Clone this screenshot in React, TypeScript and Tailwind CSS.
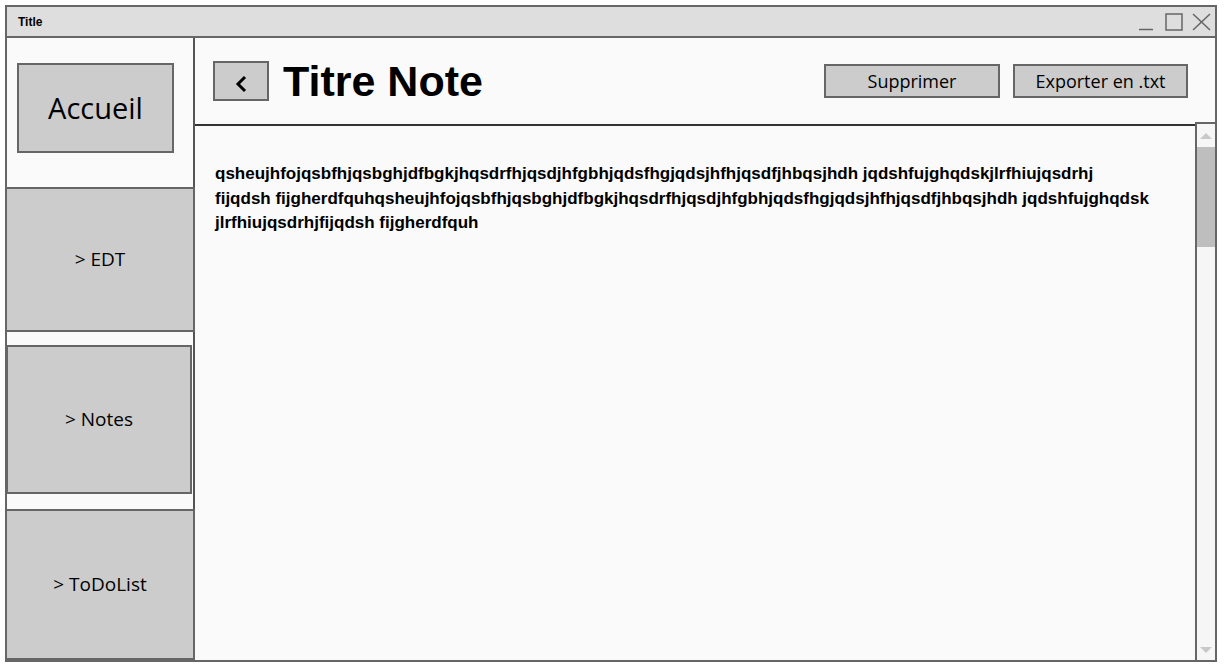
const sketch = "font-['Comic_Sans_MS','Open_Sans',sans-serif]";

const noteLines = [
  "qsheujhfojqsbfhjqsbghjdfbgkjhqsdrfhjqsdjhfgbhjqdsfhgjqdsjhfhjqsdfjhbqsjhdh jqdshfujghqdskjlrfhiujqsdrhj",
  "fijqdsh fijgherdfquhqsheujhfojqsbfhjqsbghjdfbgkjhqsdrfhjqsdjhfgbhjqdsfhgjqdsjhfhjqsdfjhbqsjhdh jqdshfujghqdsk",
  "jlrfhiujqsdrhjfijqdsh fijgherdfquh",
];

function WindowControls() {
  return (
    <svg width="72" height="18" viewBox="0 0 72 18" fill="none" stroke="#666" strokeWidth="1.5">
      <line x1="0" y1="16.5" x2="14" y2="16.5" />
      <rect x="27" y="1" width="16" height="16" />
      <line x1="54" y1="1" x2="71" y2="17" />
      <line x1="71" y1="1" x2="54" y2="17" />
    </svg>
  );
}

function SideButton({ label, className }: { label: string; className: string }) {
  return (
    <button
      type="button"
      className={`flex items-center justify-center border-2 border-[#666] bg-[#cccccc] text-[19px] text-black ${sketch} ${className}`}
    >
      {label}
    </button>
  );
}

export default function App() {
  return (
    <div className="h-[670px] w-[1226px] bg-white pl-[5px] pt-[5px]">
      <div className="flex h-[657px] w-[1212px] flex-col border-2 border-[#666] bg-[#fafafa]">
        <div className="flex h-[31px] shrink-0 items-center justify-between border-b-2 border-[#666] bg-[#dedede] pl-[11px] pr-[4px]">
          <span className="font-['Liberation_Sans',Arial,sans-serif] text-[12px] font-bold text-black">Title</span>
          <WindowControls />
        </div>

        <div className="flex min-h-0 flex-1">
          <aside className="flex w-[188px] shrink-0 flex-col border-r-2 border-[#555]">
            <button
              type="button"
              className={`ml-[10px] mt-[25px] flex h-[90px] w-[157px] items-center justify-center border-2 border-[#666] bg-[#cccccc] text-[29px] text-black ${sketch}`}
            >
              Accueil
            </button>
            <SideButton label="> EDT" className="-ml-[2px] mt-[34px] h-[145px] w-[190px]" />
            <SideButton label="> Notes" className="-ml-[1px] mt-[13px] h-[149px] w-[186px]" />
            <SideButton label="> ToDoList" className="-ml-[2px] mt-[15px] h-[151px] w-[190px]" />
          </aside>

          <main className="flex min-w-0 flex-1 flex-col">
            <header className="flex h-[88px] shrink-0 items-center border-b-2 border-[#333] pl-[18px] pr-[27px]">
              <button
                type="button"
                className="flex h-[40px] w-[56px] items-center justify-center border-2 border-[#666] bg-[#cccccc]"
              >
                <svg width="13" height="18" viewBox="0 0 13 18" fill="none" stroke="#000" strokeWidth="3" className="mt-[6px]">
                  <polyline points="10,2 3,9 10,16" />
                </svg>
              </button>
              <h1 className="ml-[14px] font-['Liberation_Sans',Arial,sans-serif] text-[43px] font-bold leading-none text-black">
                Titre Note
              </h1>
              <div className="ml-auto flex gap-[13px]">
                <button
                  type="button"
                  className={`h-[34px] w-[176px] border-2 border-[#666] bg-[#cccccc] text-[18px] text-black ${sketch}`}
                >
                  Supprimer
                </button>
                <button
                  type="button"
                  className={`h-[34px] w-[175px] border-2 border-[#666] bg-[#cccccc] text-[18px] text-black ${sketch}`}
                >
                  Exporter en .txt
                </button>
              </div>
            </header>

            <div className="flex min-h-0 flex-1">
              <div className="min-w-0 flex-1 pl-[20px] pt-[36px] font-['Liberation_Sans',Arial,sans-serif] text-[17px] font-bold leading-[24.5px] text-black">
                {noteLines.map((line) => (
                  <div key={line} className="whitespace-nowrap">
                    {line}
                  </div>
                ))}
              </div>
              <div className="-mt-[4px] flex w-[20px] shrink-0 flex-col border-l-2 border-t-2 border-[#666] bg-[#f6f6f6]">
                <div className="flex h-[23px] items-center justify-center">
                  <svg width="12" height="7" viewBox="0 0 12 7">
                    <polygon points="0,7 6,1 12,7" fill="#c8c8c8" />
                  </svg>
                </div>
                <div className="h-[100px] bg-[#bebebe]" />
                <div className="flex-1" />
                <div className="flex h-[20px] items-center justify-center">
                  <svg width="12" height="7" viewBox="0 0 12 7">
                    <polygon points="0,0 12,0 6,6" fill="#c8c8c8" />
                  </svg>
                </div>
              </div>
            </div>
          </main>
        </div>
      </div>
    </div>
  );
}
